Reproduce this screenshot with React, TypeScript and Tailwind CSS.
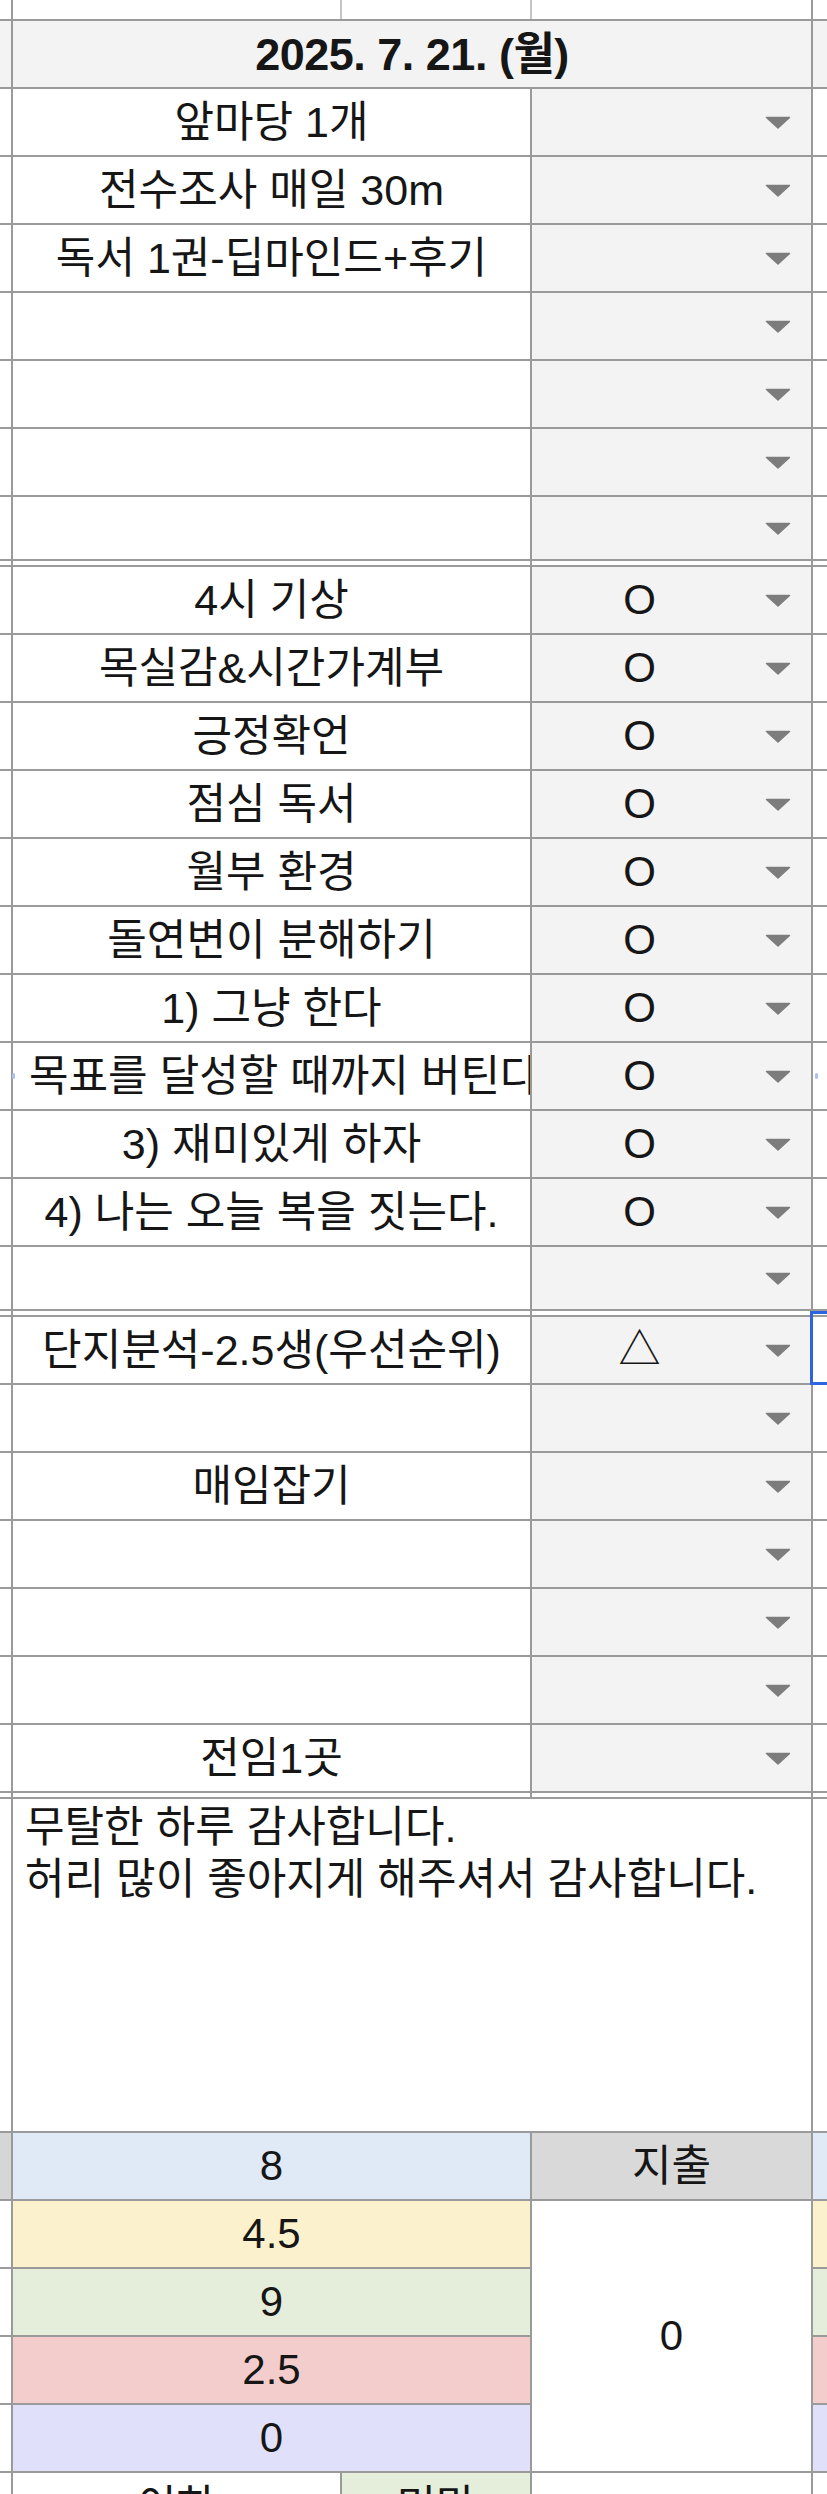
import React from 'react';

const font = "font-['Liberation_Sans','Noto_Sans_CJK_KR',sans-serif]";

function Arrow() {
  return (
    <svg width="26" height="13" viewBox="0 0 26 13">
      <path d="M1.5 1.5h23L13 12z" fill="#7d7d7d" stroke="#7d7d7d" strokeWidth="1.5" strokeLinejoin="round" />
    </svg>
  );
}

function Drop({ value }: { value: string }) {
  return (
    <div className="flex w-[281px] items-center border-r-2 border-[#9a9a9a] bg-[#f3f3f3]">
      <div className="flex flex-1 justify-center pr-[18px] text-[42px] leading-none">{value}</div>
      <div className="flex pr-[20px]">
        <Arrow />
      </div>
    </div>
  );
}

type Item = { label: string; value?: string; h?: string; clip?: boolean; dots?: boolean; selected?: boolean };

function Row({ label, value = '', h = 'h-[68px]', clip, dots, selected }: Item) {
  return (
    <div className={`flex ${h} border-b-2 border-[#9a9a9a]`}>
      <div className="relative w-[13px] border-r-2 border-[#9a9a9a] bg-white">
        {dots && <div className="absolute -right-[4px] top-[30px] h-[6px] w-[3px] rounded-full bg-[#a9c2ee]" />}
      </div>
      {clip ? (
        <div className="flex w-[519px] items-center overflow-hidden whitespace-nowrap border-r-2 border-[#9a9a9a] bg-white pl-[16px] text-[43px] leading-none">
          {label}
        </div>
      ) : (
        <div className="flex w-[519px] items-center justify-center whitespace-nowrap border-r-2 border-[#9a9a9a] bg-white text-[43px] leading-none">
          {label}
        </div>
      )}
      <Drop value={value} />
      <div className="relative flex-1 bg-white">
        {dots && <div className="absolute left-[2px] top-[30px] h-[6px] w-[3px] rounded-full bg-[#a9c2ee]" />}
        {selected && <div className="absolute -bottom-[2px] -left-[3px] -top-[6px] right-0 border-[3px] border-r-0 border-[#2f64e0]" />}
      </div>
    </div>
  );
}

function Separator() {
  return (
    <div className="flex h-[6px] border-b-2 border-[#9a9a9a]">
      <div className="w-[13px] border-r-2 border-[#9a9a9a]" />
      <div className="w-[519px] border-r-2 border-[#9a9a9a]" />
      <div className="w-[281px] border-r-2 border-[#9a9a9a]" />
      <div className="flex-1" />
    </div>
  );
}

const group1: Item[] = [
  { label: '앞마당 1개' },
  { label: '전수조사 매일 30m' },
  { label: '독서 1권-딥마인드+후기' },
  { label: '' },
  { label: '' },
  { label: '' },
  { label: '', h: 'h-[64px]' },
];

const group2: Item[] = [
  { label: '4시 기상', value: 'O' },
  { label: '목실감&시간가계부', value: 'O' },
  { label: '긍정확언', value: 'O' },
  { label: '점심 독서', value: 'O' },
  { label: '월부 환경', value: 'O' },
  { label: '돌연변이 분해하기', value: 'O' },
  { label: '1) 그냥 한다', value: 'O' },
  { label: '목표를 달성할 때까지 버틴다.', value: 'O', clip: true, dots: true },
  { label: '3) 재미있게 하자', value: 'O' },
  { label: '4) 나는 오늘 복을 짓는다.', value: 'O' },
  { label: '', h: 'h-[64px]' },
];

const group3: Item[] = [
  { label: '단지분석-2.5생(우선순위)', value: '△', selected: true },
  { label: '' },
  { label: '매임잡기' },
  { label: '' },
  { label: '' },
  { label: '' },
  { label: '전임1곳' },
];

const scores = [
  { v: '4.5', bg: 'bg-[#fcf1cd]' },
  { v: '9', bg: 'bg-[#e5eedb]' },
  { v: '2.5', bg: 'bg-[#f2cdcc]' },
  { v: '0', bg: 'bg-[#e1e0fa]' },
];

export default function App() {
  return (
    <div className={`h-[2494px] w-[827px] overflow-hidden bg-white text-[#161616] ${font}`}>
      {/* partial row above */}
      <div className="flex h-[21px] border-b-2 border-[#9a9a9a]">
        <div className="w-[13px] border-r-2 border-[#9a9a9a]" />
        <div className="w-[329px] border-r-2 border-[#c4c4c4]" />
        <div className="w-[190px] border-r-2 border-[#c4c4c4]" />
        <div className="w-[281px] border-r-2 border-[#9a9a9a]" />
        <div className="flex-1" />
      </div>

      {/* date header */}
      <div className="flex h-[68px] border-b-2 border-[#9a9a9a] bg-[#f3f3f3]">
        <div className="w-[13px] border-r-2 border-[#9a9a9a]" />
        <div className="flex w-[800px] items-center justify-center border-r-2 border-[#9a9a9a] text-[45px] font-bold leading-none tracking-[-0.5px]">
          2025. 7. 21. (월)
        </div>
        <div className="flex-1" />
      </div>

      {group1.map((r, i) => (
        <Row key={`a${i}`} {...r} />
      ))}
      <Separator />
      {group2.map((r, i) => (
        <Row key={`b${i}`} {...r} />
      ))}
      <Separator />
      {group3.map((r, i) => (
        <Row key={`c${i}`} {...r} />
      ))}
      <Separator />

      {/* gratitude note */}
      <div className="flex h-[334px] border-b-2 border-[#9a9a9a]">
        <div className="w-[13px] border-r-2 border-[#9a9a9a]" />
        <div className="w-[800px] border-r-2 border-[#9a9a9a] pl-[12px] pt-[2px] text-[43px] leading-[52px]">
          <p>무탈한 하루 감사합니다.</p>
          <p>허리 많이 좋아지게 해주셔서 감사합니다.</p>
        </div>
        <div className="flex-1" />
      </div>

      {/* totals */}
      <div className="flex h-[68px] border-b-2 border-[#9a9a9a] text-[42px] leading-none">
        <div className="w-[13px] border-r-2 border-[#9a9a9a] bg-[#d6d6d6]" />
        <div className="flex w-[519px] items-center justify-center border-r-2 border-[#9a9a9a] bg-[#e0e9f6]">8</div>
        <div className="flex w-[281px] items-center justify-center border-r-2 border-[#9a9a9a] bg-[#d9d9d9] text-[43px]">지출</div>
        <div className="flex-1 bg-[#e0e9f6]" />
      </div>

      <div className="grid grid-cols-[13px_519px_281px_14px] grid-rows-[repeat(4,68px)] text-[42px] leading-none">
        {scores.map((s, i) => (
          <React.Fragment key={s.v + i}>
            <div className="border-b-2 border-r-2 border-[#9a9a9a] bg-white" />
            <div className={`flex items-center justify-center border-b-2 border-r-2 border-[#9a9a9a] ${s.bg}`}>{s.v}</div>
            {i === 0 && (
              <div className="row-span-4 flex items-center justify-center border-b-2 border-r-2 border-[#9a9a9a] bg-white">0</div>
            )}
            <div className={`border-b-2 border-[#9a9a9a] ${s.bg}`} />
          </React.Fragment>
        ))}
      </div>

      {/* next row, cut off by the screen */}
      <div className="flex h-[68px] border-b-2 border-[#9a9a9a] text-[43px] leading-none">
        <div className="w-[13px] border-r-2 border-[#9a9a9a]" />
        <div className="flex w-[329px] items-center justify-center border-r-2 border-[#9a9a9a]">이하</div>
        <div className="flex w-[190px] items-center justify-center border-r-2 border-[#9a9a9a] bg-[#e5eedb]">미만</div>
        <div className="w-[281px] border-r-2 border-[#9a9a9a]" />
        <div className="flex-1" />
      </div>
    </div>
  );
}
